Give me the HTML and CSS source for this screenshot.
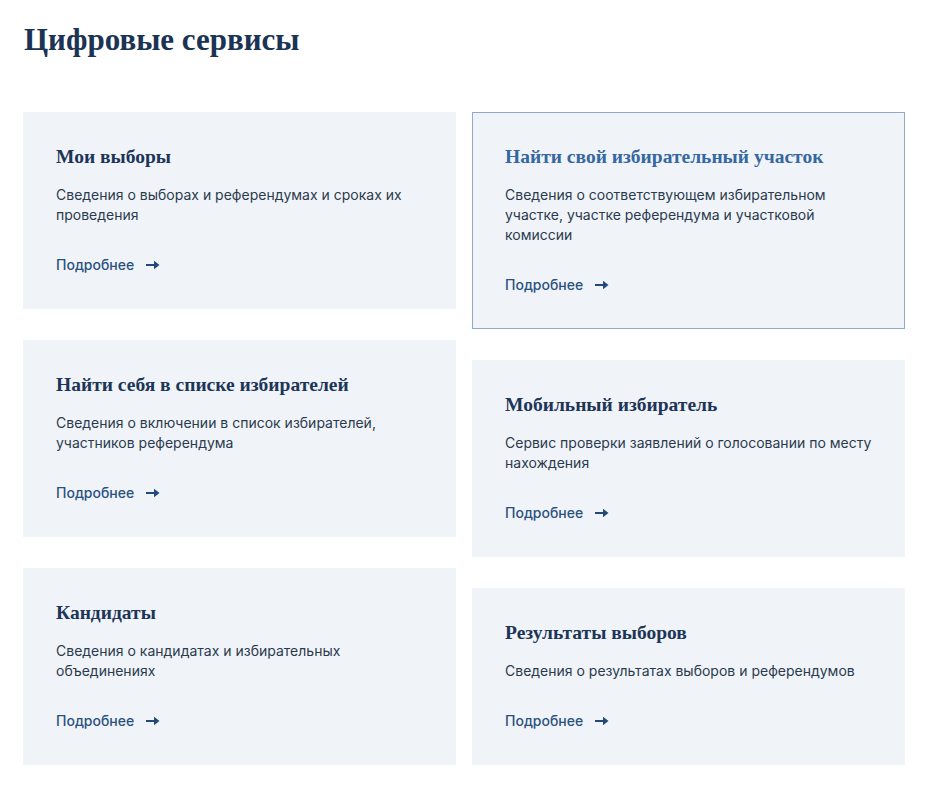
FILE: index.html
```html
<!DOCTYPE html>
<html lang="ru">
<head>
<meta charset="utf-8">
<title>Цифровые сервисы</title>
<link rel="stylesheet" href="styles.css">
</head>
<body>
<main class="page">
  <h1 class="page-title">Цифровые сервисы</h1>
  <div class="grid">
    <div class="col">
      <div class="card">
        <h2 class="card-title">Мои выборы</h2>
        <p class="card-text">Сведения о выборах и референдумах и сроках их проведения</p>
        <a class="card-link" href="#">Подробнее <svg class="arrow" width="14" height="10" viewBox="0 0 14 10"><path d="M0 5H9" stroke="currentColor" stroke-width="2"/><path d="M8 0.8L13.5 5L8 9.2Z" fill="currentColor"/></svg></a>
      </div>
      <div class="card">
        <h2 class="card-title">Найти себя в списке избирателей</h2>
        <p class="card-text">Сведения о включении в список избирателей, участников референдума</p>
        <a class="card-link" href="#">Подробнее <svg class="arrow" width="14" height="10" viewBox="0 0 14 10"><path d="M0 5H9" stroke="currentColor" stroke-width="2"/><path d="M8 0.8L13.5 5L8 9.2Z" fill="currentColor"/></svg></a>
      </div>
      <div class="card">
        <h2 class="card-title">Кандидаты</h2>
        <p class="card-text">Сведения о кандидатах и избирательных объединениях</p>
        <a class="card-link" href="#">Подробнее <svg class="arrow" width="14" height="10" viewBox="0 0 14 10"><path d="M0 5H9" stroke="currentColor" stroke-width="2"/><path d="M8 0.8L13.5 5L8 9.2Z" fill="currentColor"/></svg></a>
      </div>
    </div>
    <div class="col">
      <div class="card card-active">
        <h2 class="card-title">Найти свой избирательный участок</h2>
        <p class="card-text">Сведения о соответствующем избирательном участке, участке референдума и участковой комиссии</p>
        <a class="card-link" href="#">Подробнее <svg class="arrow" width="14" height="10" viewBox="0 0 14 10"><path d="M0 5H9" stroke="currentColor" stroke-width="2"/><path d="M8 0.8L13.5 5L8 9.2Z" fill="currentColor"/></svg></a>
      </div>
      <div class="card">
        <h2 class="card-title">Мобильный избиратель</h2>
        <p class="card-text">Сервис проверки заявлений о голосовании по месту нахождения</p>
        <a class="card-link" href="#">Подробнее <svg class="arrow" width="14" height="10" viewBox="0 0 14 10"><path d="M0 5H9" stroke="currentColor" stroke-width="2"/><path d="M8 0.8L13.5 5L8 9.2Z" fill="currentColor"/></svg></a>
      </div>
      <div class="card">
        <h2 class="card-title">Результаты выборов</h2>
        <p class="card-text">Сведения о результатах выборов и референдумов</p>
        <a class="card-link" href="#">Подробнее <svg class="arrow" width="14" height="10" viewBox="0 0 14 10"><path d="M0 5H9" stroke="currentColor" stroke-width="2"/><path d="M8 0.8L13.5 5L8 9.2Z" fill="currentColor"/></svg></a>
      </div>
    </div>
  </div>
</main>
</body>
</html>
```
FILE: styles.css
```css
* { box-sizing: border-box; }
html, body { margin: 0; padding: 0; background: #ffffff; }
body { font-family: Inter, "Noto Sans", sans-serif; color: #2b3a4d; }

.page { padding: 22px 30px 20px 23px; }

.page-title {
  margin: 0 0 54px 1px;
  font-family: "Liberation Serif", "DejaVu Serif", serif;
  font-weight: bold;
  font-size: 31px;
  line-height: 36px;
  color: #1b3354;
}

.grid {
  display: flex;
  gap: 16px;
  align-items: flex-start;
}

.col {
  width: 433px;
  display: flex;
  flex-direction: column;
  gap: 31px;
}

.card {
  background: #f0f4f9;
  padding: 33px 33px 34px 33px;
}

.card-active {
  border: 1px solid #93a9c6;
  padding: 32px 32px 33px 32px;
}

.card-title {
  margin: 0 0 16px 0;
  font-family: "Liberation Serif", "DejaVu Serif", serif;
  font-weight: bold;
  font-size: 19.5px;
  line-height: 24px;
  color: #1d3557;
}

.card-active .card-title { color: #3567a0; }

.card-text {
  margin: 0 0 30px 0;
  font-size: 14px;
  line-height: 20px;
  color: #2b3a4d;
}

.card-link {
  display: flex;
  width: max-content;
  align-items: center;
  gap: 12px;
  font-size: 14px;
  line-height: 20px;
  font-weight: 500;
  color: #2b5080;
  text-decoration: none;
}

.arrow { display: block; color: #24487a; }
```
